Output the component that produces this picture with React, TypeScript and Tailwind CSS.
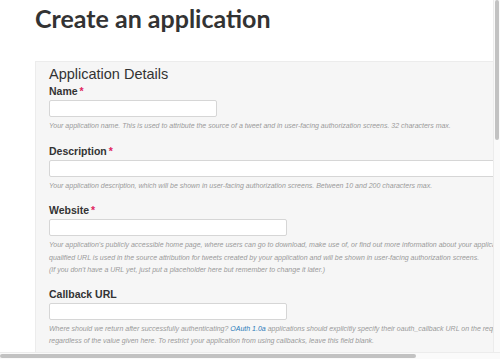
import React from 'react';

const help = 'text-[7px] italic text-[#9a9a9a] leading-[12.5px] whitespace-nowrap';
const label = 'text-[10.5px] font-bold text-[#333] leading-[12px]';
const input = 'mt-[3px] h-[17px] bg-white border border-[#d6d6d6] rounded-[2px]';

function Star() {
  return <span className="text-[#e0245e] ml-[2px]">*</span>;
}

export default function App() {
  return (
    <div className="relative w-[500px] h-[359px] overflow-hidden bg-white font-['Liberation_Sans',Arial,sans-serif]">
      <h1 className="pl-[35px] pt-[3px] h-[61px] text-[25px] font-bold text-[#333] font-['Lato',sans-serif] leading-[30px]">
        Create an application
      </h1>
      <div className="ml-[35px] w-[620px] bg-[#f6f6f6] border border-[#ececec] pl-[13px] pt-[3px] pb-[5px]">
        <h2 className="text-[14.5px] text-[#333] leading-[18px] mb-[2px]">Application Details</h2>

        <div className={label}>Name<Star /></div>
        <div className={`${input} w-[168px]`} />
        <p className={`${help} mt-[3px]`}>
          Your application name. This is used to attribute the source of a tweet and in user-facing authorization screens. 32 characters max.
        </p>

        <div className={`${label} mt-[12px]`}>Description<Star /></div>
        <div className={`${input} w-[560px]`} />
        <p className={`${help} mt-[3px]`}>
          Your application description, which will be shown in user-facing authorization screens. Between 10 and 200 characters max.
        </p>

        <div className={`${label} mt-[12px]`}>Website<Star /></div>
        <div className={`${input} w-[238px]`} />
        <p className={`${help} mt-[3px]`}>
          Your application's publicly accessible home page, where users can go to download, make use of, or find out more information about your application. This fully
          <br />
          qualified URL is used in the source attribution for tweets created by your application and will be shown in user-facing authorization screens.
          <br />
          (If you don't have a URL yet, just put a placeholder here but remember to change it later.)
        </p>

        <div className={`${label} mt-[11px]`}>Callback URL</div>
        <div className={`${input} w-[238px]`} />
        <p className={`${help} mt-[3px]`}>
          Where should we return after successfully authenticating? <span className="text-[#2b7bb9]">OAuth 1.0a</span> applications should explicitly specify their oauth_callback URL on the request token step,
          <br />
          regardless of the value given here. To restrict your application from using callbacks, leave this field blank.
        </p>
      </div>

      {/* overlay scrollbars */}
      <div className="absolute top-0 right-0 w-[7px] h-[352px] bg-[#fafafa] border-l border-[#ececec]">
        <div className="ml-[1px] w-[4px] h-[140px] rounded-full bg-[#c2c2c2]" />
      </div>
      <div className="absolute left-0 bottom-0 w-[500px] h-[7px] bg-[#fafafa] border-t border-[#ececec]">
        <div className="mt-[1px] w-[416px] h-[4px] rounded-full bg-[#c2c2c2]" />
      </div>
    </div>
  );
}
